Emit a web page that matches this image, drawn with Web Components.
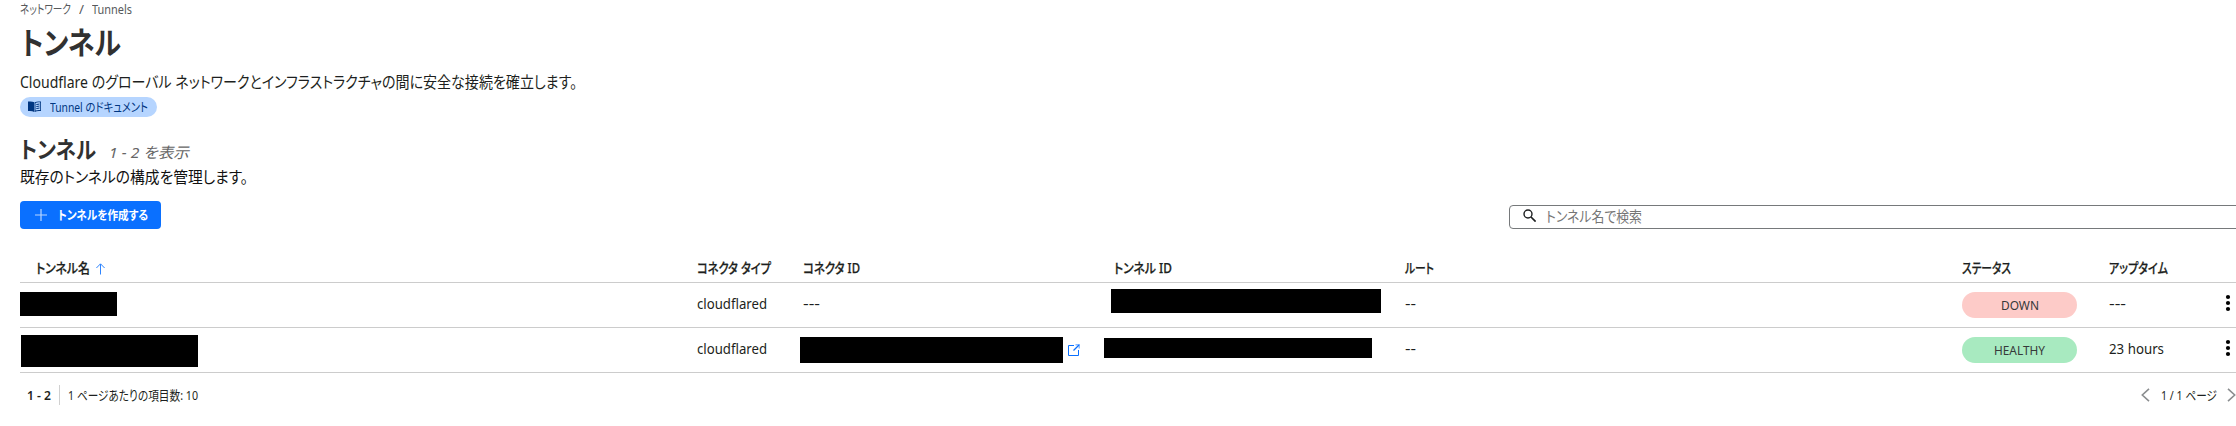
<!DOCTYPE html>
<html lang="ja">
<head>
<meta charset="utf-8">
<title>トンネル</title>
<style>
html,body{margin:0;padding:0;background:#fff;overflow:hidden;height:426px}
body{font-family:"Noto Sans","Noto Sans CJK JP",sans-serif;color:#1d1f20;font-size:14px}
</style>
</head>
<body>
<tunnels-page></tunnels-page>
<script>
const define = (name, html, init) => {
  const t = document.createElement('template');
  t.innerHTML = html;
  customElements.define(name, class extends HTMLElement {
    constructor() {
      super();
      this.attachShadow({mode: 'open'}).append(t.content.cloneNode(true));
    }
    connectedCallback() { if (init) init.call(this, this.shadowRoot); }
  });
};

// A single line of text set to a given measure (w), size (s), line height (l).
define('fit-text', `<style>
:host{display:block;flex:none;white-space:nowrap;font-feature-settings:"palt"}
span{display:inline-block;transform-origin:0 0;vertical-align:top}
</style><span><slot></slot></span>`, function (root) {
  const w = +this.getAttribute('w'), span = root.querySelector('span');
  this.style.width = w + 'px';
  if (this.hasAttribute('s')) this.style.fontSize = this.getAttribute('s') + 'px';
  this.style.lineHeight = (this.getAttribute('l') || 20) + 'px';
  const n = span.getBoundingClientRect().width;
  if (n) span.style.transform = `scaleX(${w / n})`;
});

// A blacked-out value; offsets are inside the cell that holds it.
define('redacted-value', `<style>:host{display:block;flex:none;background:#000}</style>`, function () {
  const [x, y, w, h] = this.getAttribute('box').split(' ');
  this.style.margin = `${y}px 0 0 ${x}px`;
  this.style.width = w + 'px';
  this.style.height = h + 'px';
});

define('bread-crumb', `<style>:host{display:flex;padding-left:20px;height:20px;color:#56595b}
fit-text+fit-text{margin-left:8px}</style>
<fit-text w="51" s="12.500">ネットワーク</fit-text><fit-text w="5" s="12.500">/</fit-text><fit-text w="40" s="12.500">Tunnels</fit-text>`);

define('doc-link', `<style>:host{display:flex;align-items:center;box-sizing:border-box;margin-left:20px;width:137px;height:20px;border-radius:10px;background:#b6d5ff;color:#003681;padding-left:8px}
svg{flex:none;margin:-1px 9px 0 0}fit-text{margin-top:1px}</style>
<svg width="13" height="11" viewBox="0 0 13 11"><path fill="#003681" d="M0 .600C2.300.200 4.600.300 6.300 1.300V11C4.600 10 2.300 9.700 0 10.100Z"/><path fill="#003681" fill-rule="evenodd" d="M6.700 1.300C8.400.300 10.700.200 13 .600V10.100C10.700 9.700 8.400 10 6.700 11ZM7.500 1.900V9.500C9 8.900 10.600 8.800 12.200 9V1.400C10.600 1.200 9 1.200 7.500 1.900Z"/><path stroke="#003681" d="M8.300 3.600L11.500 3M8.300 5.600L11.500 5M8.300 7.600L11.500 7"/></svg>
<fit-text w="98" s="12.500"><slot></slot></fit-text>`);

define('create-button', `<style>:host{display:flex;flex:none;align-items:center;box-sizing:border-box;width:141px;height:28px;border-radius:4px;background:#0a70ff;color:#fff;padding-left:15px;font-weight:700}
svg{margin-right:11px}fit-text{margin-top:1px}</style>
<svg width="12" height="12" viewBox="0 0 12 12"><path d="M6 0V12M0 6H12" stroke="#b9d6ff" stroke-width="1.200"/></svg>
<fit-text w="90" s="12.500"><slot></slot></fit-text>`);

define('search-box', `<style>:host{display:flex;box-sizing:border-box;width:760px;height:24px;border:1px solid #76797b;border-radius:4px;padding-left:13px;color:#757575}
svg{margin:3px 10px 0 0}</style>
<svg width="13" height="13" viewBox="0 0 13 13" fill="none" stroke="#1d1f20" stroke-width="1.400"><circle cx="5" cy="5" r="4"/><path d="M8 8L12.600 12.600" stroke-width="1.700"/></svg>
<fit-text w="96" s="14.500" l="21"><slot></slot></fit-text>`);

define('status-pill', `<style>:host{display:flex;justify-content:center;width:115px;height:26px;border-radius:13px;margin-top:9px;background:#fdcbc8;color:#36393a}
:host([kind=healthy]){background:#a8eac0}</style><slot></slot>`);

define('row-menu', `<style>:host{display:block;margin:11px 0 0 7px}svg{display:block}</style>
<svg width="6" height="18" viewBox="0 0 6 18"><circle cx="3" cy="3" r="2.100"/><circle cx="3" cy="9" r="2.100"/><circle cx="3" cy="15" r="2.100"/></svg>`);

define('table-row', `<style>:host{display:grid;grid-template-columns:677px 106px 311px 291px 557px 147px 109px 30px;height:44px;border-bottom:1px solid #ccc;width:2228px}
:host([head]){height:27px}
::slotted(div){display:flex;align-items:flex-start}</style><slot></slot>`);

define('tunnel-table', `<style>:host{display:block;padding-left:20px}
.h{font-weight:500}.t{margin-top:11px}.arrow{margin:8px 0 0 6px}.ext{margin:16px 0 0 5px}.n{padding-left:16px}
.h fit-text{-webkit-text-stroke:.25px #1d1f20}</style>
<table-row head class="h">
<div class="n"><fit-text w="54" s="13.500" l="26">トンネル名</fit-text><svg class="arrow" width="9" height="12" viewBox="0 0 9 12" fill="none" stroke="#2f85ff"><path d="M4.500 11.500V1M.400 5L4.500.800L8.600 5"/></svg></div>
<div><fit-text w="74" s="13.500" l="26">コネクタ タイプ</fit-text></div>
<div><fit-text w="57" s="13.500" l="26">コネクタ ID</fit-text></div>
<div><fit-text w="58" s="13.500" l="26">トンネル ID</fit-text></div>
<div><fit-text w="29" s="13.500" l="26">ルート</fit-text></div>
<div><fit-text w="49" s="13.500" l="26">ステータス</fit-text></div>
<div><fit-text w="59" s="13.500" l="26">アップタイム</fit-text></div><div></div>
</table-row>
<table-row>
<div><redacted-value box="0 9 97 24"></redacted-value></div>
<div><fit-text class="t" w="70" s="13.500">cloudflared</fit-text></div>
<div><fit-text class="t" w="17" s="13.500">---</fit-text></div>
<div><redacted-value box="-3 6 270 24"></redacted-value></div>
<div><fit-text class="t" w="11" s="13.500">--</fit-text></div>
<div><status-pill><fit-text w="38" s="13" l="27">DOWN</fit-text></status-pill></div>
<div><fit-text class="t" w="17" s="13.500">---</fit-text></div>
<div><row-menu></row-menu></div>
</table-row>
<table-row>
<div><redacted-value box="1 7 177 32"></redacted-value></div>
<div><fit-text class="t" w="70" s="13.500">cloudflared</fit-text></div>
<div><redacted-value box="-3 9 263 26"></redacted-value><svg class="ext" width="12" height="12" viewBox="0 0 12 12" fill="none" stroke="#0a70ff"><path d="M6 1.500H.500V11.500H10.500V6"/><path d="M7.500 0H12V4.500H10.500V1.500H7.500Z" fill="#8dbcff" stroke="none"/><path d="M5.500 6.500L11 1" stroke-width="1.200"/></svg></div>
<div><redacted-value box="-10 10 268 20"></redacted-value></div>
<div><fit-text class="t" w="11" s="13.500">--</fit-text></div>
<div><status-pill kind="healthy"><fit-text w="51" s="13" l="27">HEALTHY</fit-text></status-pill></div>
<div><fit-text class="t" w="55" s="13.500">23 hours</fit-text></div>
<div><row-menu></row-menu></div>
</table-row>`);

define('page-footer', `<style>:host{display:flex;padding:12px 0 0 27px;height:20px}
b{font-weight:600}i{flex:none;width:1px;height:20px;background:#d0d0d0;margin:0 8px}
.prev{margin:3px 11px 0 1943px}.next{margin:3px 0 0 10px}svg{flex:none}</style>
<fit-text w="24" s="13"><b>1 - 2</b></fit-text><i></i><fit-text w="130" s="13">1 ページあたりの項目数: 10</fit-text>
<svg class="prev" width="9" height="14" viewBox="0 0 9 14" fill="none" stroke="#8a8d8f" stroke-width="1.600"><path d="M8 .800L1.300 7L8 13.200"/></svg>
<fit-text w="56" s="13">1 / 1 ページ</fit-text>
<svg class="next" width="9" height="14" viewBox="0 0 9 14" fill="none" stroke="#8a8d8f" stroke-width="1.600"><path d="M1 .800L7.700 7L1 13.200"/></svg>`);

define('tunnels-page', `<style>:host{display:block;width:2236px;height:426px;overflow:hidden}
h1,h2{margin:0;font-weight:700;color:#313131;font-size:inherit}
h1{padding-left:21px;margin-top:2px}
.d{margin-left:20px;margin-top:9px;height:23px}
doc-link{margin-top:3px}
.row{display:flex}.sub{padding:17px 0 0 20px;height:31px}
.cnt{margin:6px 0 0 13px;font-style:italic;color:#666}
.m{margin:0 0 0 20px;color:#111}
.tools{padding:12px 0 0 20px;height:54px}
search-box{margin:4px 0 0 1348px;flex:none}</style>
<bread-crumb></bread-crumb>
<h1><fit-text w="100" s="31" l="40">トンネル</fit-text></h1>
<fit-text class="d" w="557" s="15.500" l="23">Cloudflare のグローバル ネットワークとインフラストラクチャの間に安全な接続を確立します。</fit-text>
<doc-link>Tunnel のドキュメント</doc-link>
<div class="row sub"><h2><fit-text w="76" s="23" l="30">トンネル</fit-text></h2><fit-text class="cnt" w="80" s="15" l="24">1 - 2 を表示</fit-text></div>
<fit-text class="m" w="228" s="15.500" l="24">既存のトンネルの構成を管理します。</fit-text>
<div class="row tools"><create-button>トンネルを作成する</create-button><search-box>トンネル名で検索</search-box></div>
<tunnel-table></tunnel-table>
<page-footer></page-footer>`);
</script>
</body>
</html>
